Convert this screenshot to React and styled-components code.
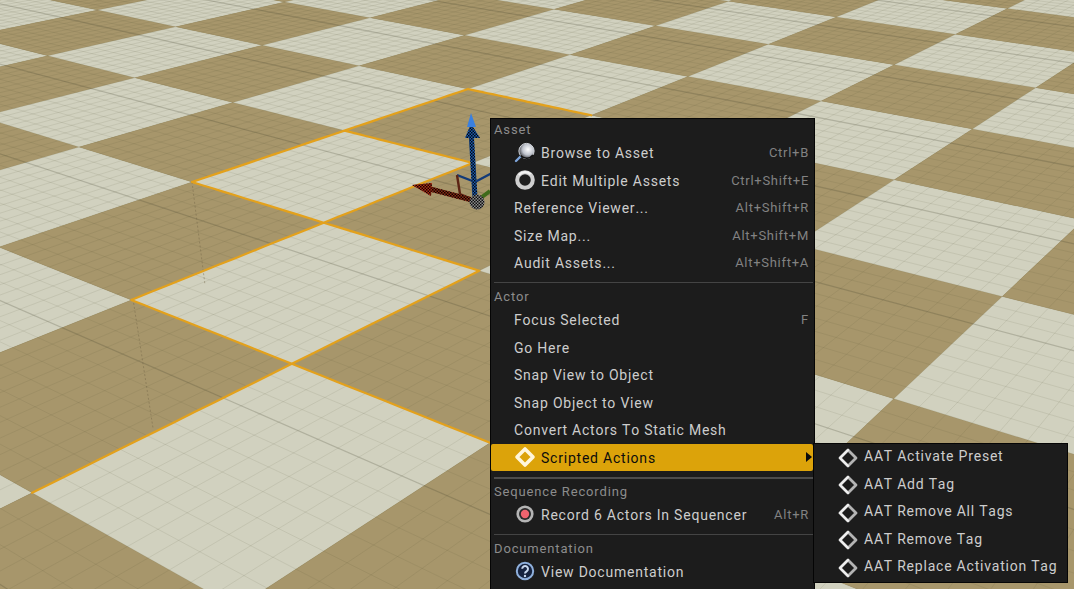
import React from 'react';
import styled, { createGlobalStyle } from 'styled-components';

const Global = createGlobalStyle`
  html, body { margin: 0; padding: 0; background: #a49468; overflow: hidden; }
`;

const Stage = styled.div`
  position: relative;
  width: 1074px;
  height: 589px;
  overflow: hidden;
  font-family: Roboto, "Liberation Sans", sans-serif;
  font-kerning: none;
`;
const Floor = styled.svg`
  display: block;
  width: 1074px;
  height: 589px;
  filter: blur(0.45px);
`;
const Menu = styled.div`
  position: absolute;
  left: 490px;
  top: 118px;
  width: 323px;
  height: 480px;
  background: #1c1c1c;
  border: 1px solid #050505;
`;
const SubMenu = styled.div`
  position: absolute;
  left: 813px;
  top: 443px;
  width: 253px;
  background: #1c1c1c;
  border: 1px solid #050505;
`;
const Header = styled.div`
  height: 20px;
  line-height: 21px;
  padding-left: 3px;
  font-size: 13px;
  letter-spacing: 0.85px;
  color: #8c8c8c;
`;
const Separator = styled.div`
  height: 9.5px;
  box-sizing: border-box;
  padding: 5.5px 1px 0 3px;
  &::after {
    content: '';
    display: block;
    height: ${p => p.$thick ? 2 : 1}px;
    background: ${p => p.$thick ? '#4c4c4c' : '#444444'};
  }
`;
const Row = styled.div`
  display: flex;
  align-items: center;
  height: 27.5px;
  box-sizing: border-box;
  padding: 0 5px 0 23px;
  font-size: 14px;
  letter-spacing: 0.78px;
  color: ${p => p.$active ? '#0c0c0c' : '#cdcdcd'};
  background: ${p => p.$active ? '#dca30a' : 'transparent'};
  border-radius: ${p => p.$active ? '2px' : '0'};
  margin-right: ${p => p.$active ? '1px' : '0'};
  white-space: nowrap;
`;
const IconSlot = styled.span`
  flex: 0 0 27px;
  width: 27px;
  height: 22px;
  display: flex;
  align-items: center;
`;
const Label = styled.span`
  flex: 1;
  position: relative;
  top: ${p => p.$lift ? '-1.3px' : '0.5px'};
`;
const Shortcut = styled.span`
  font-size: 13px;
  letter-spacing: 0.72px;
  color: #828282;
`;
const Arrow = styled.span`
  width: 0;
  height: 0;
  margin-right: -4px;
  border-left: 6px solid #0c0c0c;
  border-top: 5px solid transparent;
  border-bottom: 5px solid transparent;
`;

/* ---- floor projection: grid coordinates to screen pixels ---- */
const H = { a: 193.1, b: 106.9, c: 192, d: -36, e: 23.6, f: 182, g: 0.1177, h: -0.0767 };
const den = (u, v) => H.g * u + H.h * v + 1;
const pt = (u, v) => {
  const w = den(u, v);
  return [(H.a * u + H.b * v + H.c) / w, (H.d * u + H.e * v + H.f) / w];
};
const fmt = p => `${p[0].toFixed(1)} ${p[1].toFixed(1)}`;
const MIN_W = 0.22;
const U0 = -7, U1 = 16, V0 = -14, V1 = 7;

function FloorCells() {
  const cells = [];
  for (let u = U0; u < U1; u++) {
    for (let v = V0; v < V1; v++) {
      if (Math.min(den(u, v), den(u + 1, v), den(u, v + 1), den(u + 1, v + 1)) < MIN_W) continue;
      const d = `M${fmt(pt(u, v))}L${fmt(pt(u + 1, v))}L${fmt(pt(u + 1, v + 1))}L${fmt(pt(u, v + 1))}Z`;
      const light = ((u + v) % 2 + 2) % 2 === 0;
      cells.push(<path key={`${u}_${v}`} d={d} fill={light ? '#d1d1bf' : '#a7966b'} />);
    }
  }
  return cells;
}

function line(u0, v0, u1, v1) {
  const parts = [];
  const n = 24;
  for (let i = 0; i <= n; i++) {
    const u = u0 + (u1 - u0) * i / n;
    const v = v0 + (v1 - v0) * i / n;
    if (den(u, v) < MIN_W) continue;
    parts.push(`${parts.length ? 'L' : 'M'}${fmt(pt(u, v))}`);
  }
  return parts.join('');
}

function minorGrid() {
  let d = '';
  for (let i = U0 * 10; i <= U1 * 10; i++) d += line(i / 10, V0, i / 10, V1);
  for (let i = V0 * 10; i <= V1 * 10; i++) d += line(U0, i / 10, U1, i / 10);
  return d;
}
function majorGrid() {
  let d = '';
  for (let k = U0; k <= U1; k++) d += line(k + 0.7, V0, k + 0.7, V1);
  return d;
}
const minor = minorGrid();
const major = majorGrid();

const ORANGE_EDGES = [
  [-1, 1, -1, 3], [0, 0, 0, 2], [1, 0, 1, 1], [2, 0, 2, 1],
  [0, 0, 2, 0], [-1, 1, 1, 1], [-2, 2, 0, 2],
];

function FloorDrawing() {
  return (
    <Floor viewBox="0 0 1074 589">
      <defs>
        <pattern id="dither" width="3" height="3" patternUnits="userSpaceOnUse">
          <rect width="1.5" height="1.5" fill="#000" fillOpacity="0.9" />
          <rect x="1.5" y="1.5" width="1.5" height="1.5" fill="#000" fillOpacity="0.9" />
        </pattern>
      </defs>
      <FloorCells />
      <path d={minor} fill="none" stroke="#4a4a30" strokeOpacity="0.1" strokeWidth="1" />
      <path d={major} fill="none" stroke="#3c3c28" strokeOpacity="0.14" strokeWidth="1.3" />
      <path d="M133 299L153 428M192 182L205 285" fill="none" stroke="#6e6244" strokeOpacity="0.45" strokeWidth="1" strokeDasharray="2 2" />
      <path
        d={ORANGE_EDGES.map(e => line(...e)).join('')}
        fill="none" stroke="#e3a11c" strokeWidth="2.2" strokeLinecap="round"
      />
      {/* transform gizmo */}
      <g>
        <path d="M457 175L475 182L492 173" fill="none" stroke="#123a78" strokeWidth="2.4" />
        <path d="M457 175L460 194L476 201" fill="none" stroke="#5c2414" strokeWidth="2.4" />
        <path d="M478 200L490 191" stroke="#3e6a1a" strokeWidth="4" />
        <path d="M471 130L475 198" stroke="#1c5bb0" strokeWidth="5" />
        <path d="M471 130L475 198" stroke="url(#dither)" strokeWidth="5" />
        <path d="M465 138L471 124L480 138Z" fill="#1c5bb0" />
        <path d="M465 138L471 124L480 138Z" fill="url(#dither)" />
        <path d="M467 127L471 113L476 127Z" fill="#3a80e0" />
        <path d="M430 189L476 201" stroke="#8a2a12" strokeWidth="5" />
        <path d="M430 189L476 201" stroke="url(#dither)" strokeWidth="5" />
        <path d="M412 185L432 183L431 196Z" fill="#b02a12" />
        <path d="M412 185L432 183L431 196Z" fill="url(#dither)" />
        <circle cx="477" cy="202" r="7.5" fill="#8a8a8a" />
        <circle cx="477" cy="202" r="7.5" fill="url(#dither)" />
      </g>
    </Floor>
  );
}

/* ---- icons ---- */
const IconSvg = styled.svg`
  display: block;
  width: 22px;
  height: 22px;
`;
const BrowseIcon = () => (
  <IconSvg viewBox="0 0 22 22">
    <defs>
      <radialGradient id="lensA" cx="0.6" cy="0.4" r="0.65">
        <stop offset="0" stopColor="#fff" />
        <stop offset="0.55" stopColor="#bfc3cc" />
        <stop offset="1" stopColor="#34363c" />
      </radialGradient>
    </defs>
    <path d="M2 19L7.5 13.5" stroke="#7fa6dc" strokeWidth="2.4" strokeLinecap="round" />
    <circle cx="12.5" cy="9" r="7.6" fill="url(#lensA)" stroke="#d7dae0" strokeWidth="1" />
    <path d="M6.5 13.5A8 8 0 0 0 19 13" fill="none" stroke="#101010" strokeWidth="1.6" />
  </IconSvg>
);
const RingIcon = () => (
  <IconSvg viewBox="0 0 22 22">
    <circle cx="11" cy="11" r="7.8" fill="#202020" stroke="#cfcfcf" strokeWidth="4" />
    <path d="M5 6.2A7.8 7.8 0 0 1 16.5 5.2" fill="none" stroke="#f4f4f4" strokeWidth="2.2" />
  </IconSvg>
);
const DiamondIcon = ({ active }) => (
  <IconSvg viewBox="0 0 22 22">
    <path d="M11 3L19 11L11 19L3 11Z" fill="none"
      stroke={active ? '#fff6dc' : '#b4b4b4'} strokeWidth={active ? 3.6 : 2.8} strokeLinejoin="round" />
    {!active && <path d="M3 11L11 3M11 19L4 12" fill="none" stroke="#f0f0f0" strokeWidth="2.4" strokeLinecap="round" />}
  </IconSvg>
);
const RecordIcon = () => (
  <IconSvg viewBox="0 0 22 22">
    <circle cx="11" cy="11" r="8.6" fill="#b4b4b4" />
    <circle cx="11" cy="11" r="6" fill="#2a2a2a" />
    <circle cx="11" cy="11" r="4.2" fill="#f0636e" />
  </IconSvg>
);
const HelpIcon = () => (
  <IconSvg viewBox="0 0 22 22">
    <circle cx="11" cy="11" r="8.2" fill="#16233f" stroke="#8fb0dc" strokeWidth="2" />
    <path d="M8.2 8.8A2.9 2.9 0 1 1 12.6 11.3C11.6 11.9 11 12.3 11 13.4" fill="none" stroke="#c8d8ee" strokeWidth="2" />
    <circle cx="11" cy="16" r="1.2" fill="#c8d8ee" />
  </IconSvg>
);

const MenuRow = ({ icon: Icon, label, shortcut, active, arrow, lift }) => (
  <Row $active={active}>
    {Icon && <IconSlot><Icon active={active} /></IconSlot>}
    <Label $lift={lift}>{label}</Label>
    {shortcut && <Shortcut>{shortcut}</Shortcut>}
    {arrow && <Arrow />}
  </Row>
);

const SECTIONS = [
  { title: 'Asset', rows: [
    { label: 'Browse to Asset', icon: BrowseIcon, shortcut: 'Ctrl+B' },
    { label: 'Edit Multiple Assets', icon: RingIcon, shortcut: 'Ctrl+Shift+E' },
    { label: 'Reference Viewer...', shortcut: 'Alt+Shift+R' },
    { label: 'Size Map...', shortcut: 'Alt+Shift+M' },
    { label: 'Audit Assets...', shortcut: 'Alt+Shift+A' },
  ] },
  { title: 'Actor', rows: [
    { label: 'Focus Selected', shortcut: 'F' },
    { label: 'Go Here' },
    { label: 'Snap View to Object' },
    { label: 'Snap Object to View' },
    { label: 'Convert Actors To Static Mesh' },
    { label: 'Scripted Actions', icon: DiamondIcon, active: true, arrow: true },
  ] },
  { title: 'Sequence Recording', thick: true, rows: [
    { label: 'Record 6 Actors In Sequencer', icon: RecordIcon, shortcut: 'Alt+R' },
  ] },
  { title: 'Documentation', rows: [
    { label: 'View Documentation', icon: HelpIcon },
  ] },
];

const SUB_ITEMS = ['AAT Activate Preset', 'AAT Add Tag', 'AAT Remove All Tags', 'AAT Remove Tag', 'AAT Replace Activation Tag'];

export default function App() {
  return (
    <>
      <Global />
      <Stage>
        <FloorDrawing />
        <Menu>
          {SECTIONS.map((s, i) => (
            <section key={s.title}>
              {i > 0 && <Separator $thick={s.thick} />}
              <Header>{s.title}</Header>
              {s.rows.map(r => <MenuRow key={r.label} {...r} />)}
            </section>
          ))}
        </Menu>
        <SubMenu>
          {SUB_ITEMS.map(t => <MenuRow key={t} label={t} icon={DiamondIcon} lift />)}
        </SubMenu>
      </Stage>
    </>
  );
}
